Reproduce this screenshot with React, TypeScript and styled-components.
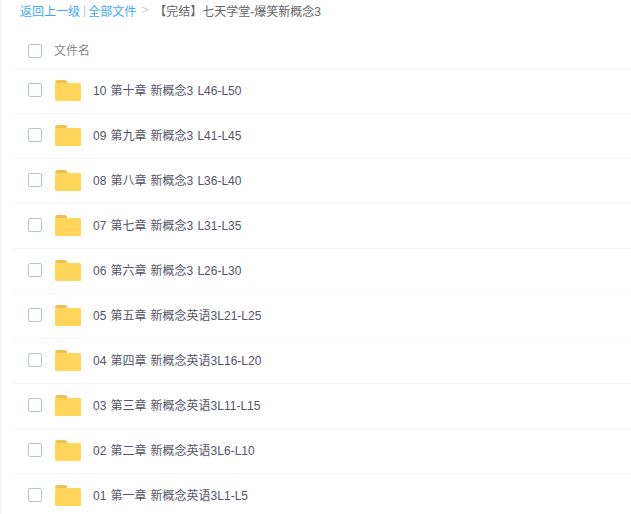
import * as React from "react"
import styled, { createGlobalStyle } from "styled-components"

const folders = [
  "10 第十章 新概念3 L46-L50",
  "09 第九章 新概念3 L41-L45",
  "08 第八章 新概念3 L36-L40",
  "07 第七章 新概念3 L31-L35",
  "06 第六章 新概念3 L26-L30",
  "05 第五章 新概念英语3L21-L25",
  "04 第四章 新概念英语3L16-L20",
  "03 第三章 新概念英语3L11-L15",
  "02 第二章 新概念英语3L6-L10",
  "01 第一章 新概念英语3L1-L5"
]

const FolderIcon = () => (
  <svg width="26" height="21" viewBox="0 0 26 21" aria-hidden="true">
    <path d="M0 2.5C0 1 1 0 2.5 0h7C11 0 12 .8 12.5 3H1z" fill="#f0c04f" />
    <rect x="0" y="3" width="26" height="18" rx="1.5" fill="#ffd659" />
  </svg>
)

const App = () => (
  <Page>
    <GlobalStyle />
    <Breadcrumb>
      <CrumbLink>返回上一级</CrumbLink>
      <CrumbDivider>|</CrumbDivider>
      <CrumbLink>全部文件</CrumbLink>
      <CrumbArrow>&gt;</CrumbArrow>
      <CrumbCurrent>【完结】七天学堂-爆笑新概念3</CrumbCurrent>
    </Breadcrumb>
    <HeaderRow>
      <Checkbox />
      <HeaderLabel>文件名</HeaderLabel>
    </HeaderRow>
    {folders.map(name => (
      <FileRow key={name}>
        <Checkbox />
        <FolderSlot>
          <FolderIcon />
        </FolderSlot>
        <FileName>{name}</FileName>
      </FileRow>
    ))}
  </Page>
)

const GlobalStyle = createGlobalStyle`
  html, body {
    margin: 0;
    background: #fff;
    overflow: hidden;
  }
  body {
    font-family: "Liberation Sans", "Noto Sans CJK SC", sans-serif;
  }
`

const Page = styled.div`
  width: 631px;
  height: 514px;
  overflow: hidden;
  box-sizing: border-box;
  padding-left: 11px;
  border-left: 2px solid #f7f7f8;
  background: #fff;
`

const Breadcrumb = styled.div`
  display: flex;
  align-items: center;
  height: 20px;
  padding-left: 7px;
  box-sizing: border-box;
  font-size: 12px;
`

const CrumbLink = styled.span`
  color: #3fa9f5;
`

const CrumbDivider = styled.span`
  color: #a5cdea;
  margin: 0 2px 0 3px;
`

const CrumbArrow = styled.span`
  color: #c5d0dc;
  margin: 0 6px 0 5px;
`

const CrumbCurrent = styled.span`
  color: #666;
`

const HeaderRow = styled.div`
  display: flex;
  align-items: center;
  height: 49px;
  box-sizing: border-box;
  padding: 16px 0 0 15px;
  border-bottom: 1px solid #f5f6fa;
`

const HeaderLabel = styled.span`
  margin: 0 0 5px 12px;
  font-size: 12px;
  color: #888;
`

const FileRow = styled.div`
  display: flex;
  align-items: center;
  height: 45px;
  box-sizing: border-box;
  padding-left: 15px;
  border-bottom: 1px solid #f5f6fa;
`

const Checkbox = styled.span`
  width: 14px;
  height: 14px;
  flex: none;
  margin-bottom: 2px;
  box-sizing: border-box;
  border: 1px solid #b8c4d2;
  border-radius: 2px;
  background: #fff;
`

const FolderSlot = styled.span`
  display: flex;
  margin: 0 0 1px 13px;
`

const FileName = styled.span`
  margin: 0 0 3px 12px;
  font-size: 12px;
  word-spacing: 0.8px;
  color: #555566;
`

export default App
